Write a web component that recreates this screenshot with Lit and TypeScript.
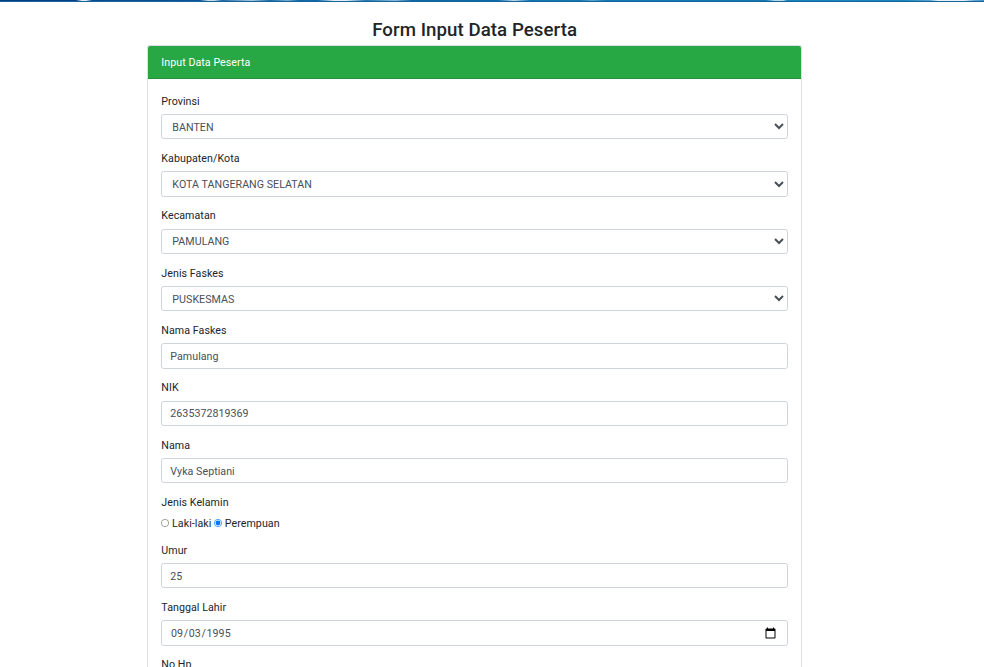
import { LitElement, html, css } from "lit";
import { customElement } from "lit/decorators.js";

interface Field {
  label: string;
  kind: "select" | "text" | "number" | "date" | "radio";
  value: string;
  options?: string[];
}

const FIELDS: Field[] = [
  { label: "Provinsi", kind: "select", value: "BANTEN" },
  { label: "Kabupaten/Kota", kind: "select", value: "KOTA TANGERANG SELATAN" },
  { label: "Kecamatan", kind: "select", value: "PAMULANG" },
  { label: "Jenis Faskes", kind: "select", value: "PUSKESMAS" },
  { label: "Nama Faskes", kind: "text", value: "Pamulang" },
  { label: "NIK", kind: "text", value: "2635372819369" },
  { label: "Nama", kind: "text", value: "Vyka Septiani" },
  { label: "Jenis Kelamin", kind: "radio", value: "Perempuan", options: ["Laki-laki", "Perempuan"] },
  { label: "Umur", kind: "number", value: "25" },
  { label: "Tanggal Lahir", kind: "date", value: "1995-09-03" },
  { label: "No Hp", kind: "text", value: "" },
];

@customElement("app-root")
export class AppRoot extends LitElement {
  static styles = css`
    :host {
      display: block;
      height: 667px;
      overflow: hidden;
      background: #fff;
    }
    *, *::before, *::after { box-sizing: border-box; }
    .banner {
      height: 2px;
      border-bottom: 1px solid #15649a;
      background: linear-gradient(90deg,
        #083a80 0, #0a3f87 76px, #e8eef4 82px, #e8eef4 86px, #0c4a8e 92px,
        #0d5298 200px, #c8dcea 208px, #c8dcea 214px, #2268a6 222px,
        #a9c9df 252px, #1766a5 270px, #7daed0 288px, #1268a8 298px,
        #1268a8 318px, #e6eff5 334px, #e6eff5 346px, #2375b0 366px,
        #8fbcd8 395px, #0d67a3 412px, #0b6ba8 498px, #c2dceb 514px,
        #0d76b0 530px, #1479b1 580px, #5ba4cb 592px, #0f79b4 606px,
        #1178b1 766px, #b9d9ea 775px, #b9d9ea 783px, #1585bd 787px,
        #1a85bd 905px, #5aa4cc 930px, #e8f1f5 938px, #e8f1f5 964px, #6aa7cc 974px, #3e8fc4 984px);
    }
    .page {
      zoom: 0.6666667;
      width: 983px;
      margin-left: 220.5px;
      padding-top: 25.5px;
      font: 400 16px/1.5 Roboto, sans-serif;
      letter-spacing: 0.08px;
      color: #212529;
    }
    .title {
      margin: 0 0 5.5px;
      text-align: center;
      font-size: 28px;
      font-weight: 500;
      line-height: 1.2;
      letter-spacing: 0.1px;
    }
    .card {
      border: 1px solid rgba(0, 0, 0, 0.125);
      border-radius: 4px;
      background: #fff;
    }
    .header {
      padding: 13.5px 20px 10.5px;
      border-bottom: 1px solid rgba(0, 0, 0, 0.125);
      border-radius: 3px 3px 0 0;
      background: #28a745;
      color: #fff;
    }
    .body { padding: 20.5px 20px 20px; }
    .group { margin-bottom: 16px; }
    .label { display: block; padding-top: 1.5px; margin-bottom: 6.5px; }
    .control {
      display: block;
      width: 100%;
      height: 38px;
      margin: 0;
      padding: 7px 12px 5px;
      border: 1px solid #ced4da;
      border-radius: 4px;
      background: #fff;
      color: #495057;
      font: inherit;
      letter-spacing: 0.05px;
      outline: none;
    }
    select.control { padding-top: 6.6px; }
    .control::-webkit-calendar-picker-indicator {
      width: 20px;
      height: 20px;
      padding: 0;
      margin-right: 2.5px;
    }
    .radios { height: 23.5px; padding-top: 1px; }
    .radio { width: 12px; height: 12px; margin: 0; padding: 0; }
  `;

  private control(f: Field) {
    if (f.kind === "select") {
      return html`<select class="control"><option selected>${f.value}</option></select>`;
    }
    if (f.kind === "radio") {
      return html`<div class="radios">${f.options!.map(
        (o) => html`<input class="radio" type="radio" name="gender" .checked=${o === f.value}> ${o} `
      )}</div>`;
    }
    // The number field shares the text appearance: no spin buttons.
    const type = f.kind === "date" ? "date" : "text";
    return html`<input class="control" type=${type} .value=${f.value}>`;
  }

  render() {
    return html`
      <div class="banner"></div>
      <main class="page">
        <h3 class="title">Form Input Data Peserta</h3>
        <section class="card">
          <div class="header">Input Data Peserta</div>
          <form class="body">
            ${FIELDS.map(
              (f) => html`<div class="group"><label class="label">${f.label}</label>${this.control(f)}</div>`
            )}
          </form>
        </section>
      </main>
    `;
  }
}
